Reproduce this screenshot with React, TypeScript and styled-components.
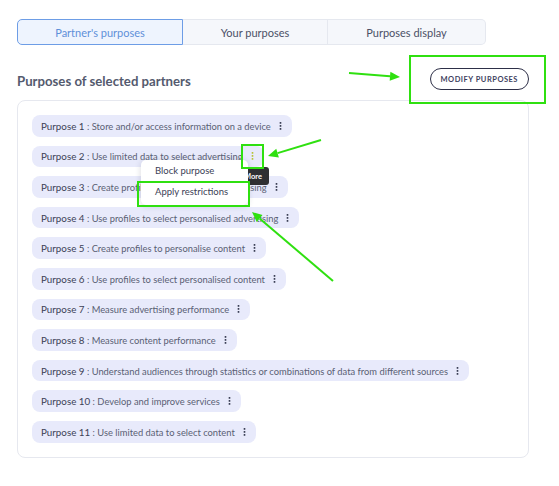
import React from "react";
import styled, { createGlobalStyle } from "styled-components";

const GlobalStyle = createGlobalStyle`
  body {
    margin: 0;
    background: #ffffff;
    font-family: Lato, "Noto Sans", sans-serif;
  }
`;

const Page = styled.div`
  position: relative;
  width: 559px;
  height: 486px;
  padding: 19px 17px 0;
  box-sizing: border-box;
`;

const Tabs = styled.div`
  display: grid;
  grid-template-columns: 166px 145px 158px;
  height: 26px;
`;

const Tab = styled.div<{ $active?: boolean; $first?: boolean; $last?: boolean }>`
  display: flex;
  align-items: center;
  justify-content: center;
  font-size: 11px;
  color: ${(p) => (p.$active ? "#5e90d9" : "#4b5066")};
  background: ${(p) => (p.$active ? "#eef4fe" : "#f5f7fb")};
  border: 1px solid ${(p) => (p.$active ? "#6d9de6" : "#e5e8ef")};
  border-left-width: ${(p) => (p.$first ? "1px" : "0")};
  border-radius: ${(p) =>
    p.$first ? "5px 0 0 5px" : p.$last ? "0 5px 5px 0" : "0"};
`;

const Header = styled.div`
  display: flex;
  justify-content: space-between;
  align-items: center;
  width: 512px;
  height: 22px;
  margin-top: 23px;
`;

const Title = styled.h2`
  margin: 4px 0 0;
  font-size: 13.2px;
  font-weight: 700;
  color: #545a6e;
`;

const ModifyButton = styled.button`
  height: 22px;
  padding: 0 10px;
  border: 1px solid #2d2f47;
  border-radius: 11px;
  background: #ffffff;
  font-family: inherit;
  font-size: 7.5px;
  font-weight: 700;
  letter-spacing: 0.5px;
  color: #3e4160;
`;

const Card = styled.div`
  display: flex;
  flex-direction: column;
  align-items: flex-start;
  gap: 9px;
  width: 512px;
  box-sizing: border-box;
  margin-top: 10px;
  padding: 14px 14px;
  border: 1px solid #e6e8ef;
  border-radius: 8px;
`;

const Pill = styled.div`
  display: inline-flex;
  align-items: center;
  gap: 8px;
  height: 21.6px;
  padding: 0 10px 0 9px;
  border-radius: 8px;
  background: #e8eafb;
  font-size: 9.35px;
  color: #5a5f74;
  white-space: nowrap;
`;

const PurposeNo = styled.span`
  color: #3c4156;
  font-size: 9.8px;
`;

const Dots = ({ color = "#3c4156" }: { color?: string }) => (
  <svg width="3" height="8" viewBox="0 0 3 8">
    <rect x="0.7" y="0" width="1.6" height="1.8" fill={color} />
    <rect x="0.7" y="3" width="1.6" height="1.8" fill={color} />
    <rect x="0.7" y="6" width="1.6" height="1.8" fill={color} />
  </svg>
);

const Menu = styled.div`
  position: absolute;
  left: 141px;
  top: 160px;
  width: 107px;
  padding: 0 0 3px;
  background: #ffffff;
  border-radius: 5px;
  box-shadow: 0 1px 6px rgba(40, 45, 70, 0.18);
  z-index: 3;
`;

const MenuItem = styled.div`
  height: 21px;
  display: flex;
  align-items: center;
  padding-left: 14px;
  font-size: 9.5px;
  color: #3c4156;
`;

const Tooltip = styled.div`
  position: absolute;
  left: 237px;
  top: 167px;
  width: 32px;
  height: 18px;
  display: flex;
  align-items: center;
  justify-content: center;
  background: #2f3033;
  border-radius: 3px;
  color: #ffffff;
  font-size: 7.5px;
  font-weight: 700;
  z-index: 2;
`;

const Highlight = styled.div<{ $x: number; $y: number; $w: number; $h: number }>`
  position: absolute;
  left: ${(p) => p.$x}px;
  top: ${(p) => p.$y}px;
  width: ${(p) => p.$w}px;
  height: ${(p) => p.$h}px;
  box-sizing: border-box;
  border: 2.5px solid #2fe010;
  z-index: 4;
  pointer-events: none;
`;

const Arrows = styled.svg`
  position: absolute;
  left: 0;
  top: 0;
  z-index: 5;
  pointer-events: none;
`;

const purposes = [
  "Store and/or access information on a device",
  "Use limited data to select advertising",
  "Create profiles for personalised advertising",
  "Use profiles to select personalised advertising",
  "Create profiles to personalise content",
  "Use profiles to select personalised content",
  "Measure advertising performance",
  "Measure content performance",
  "Understand audiences through statistics or combinations of data from different sources",
  "Develop and improve services",
  "Use limited data to select content",
];

const Arrow = ({ x1, y1, x2, y2 }: { x1: number; y1: number; x2: number; y2: number }) => {
  const a = Math.atan2(y2 - y1, x2 - x1);
  const len = 10;
  const wing = 4.5;
  const bx = x2 - len * Math.cos(a);
  const by = y2 - len * Math.sin(a);
  const px = -Math.sin(a) * wing;
  const py = Math.cos(a) * wing;
  return (
    <g>
      <line x1={x1} y1={y1} x2={bx} y2={by} stroke="#2fe010" strokeWidth="2" />
      <polygon
        points={`${x2},${y2} ${bx + px},${by + py} ${bx - px},${by - py}`}
        fill="#2fe010"
      />
    </g>
  );
};

export default function App() {
  return (
    <>
      <GlobalStyle />
      <Page>
        <Tabs>
          <Tab $active $first>
            Partner's purposes
          </Tab>
          <Tab>Your purposes</Tab>
          <Tab $last>Purposes display</Tab>
        </Tabs>
        <Header>
          <Title>Purposes of selected partners</Title>
          <ModifyButton>MODIFY PURPOSES</ModifyButton>
        </Header>
        <Card>
          {purposes.map((text, i) => (
            <Pill key={i}>
              <span>
                <PurposeNo>Purpose {i + 1}</PurposeNo> : {text}
              </span>
              <Dots color={i === 1 ? "#b9c43a" : undefined} />
            </Pill>
          ))}
        </Card>

        <Tooltip>More</Tooltip>
        <Menu>
          <MenuItem>Block purpose</MenuItem>
          <MenuItem>Apply restrictions</MenuItem>
        </Menu>

        <Highlight $x={409} $y={55} $w={137} $h={49} />
        <Highlight $x={241} $y={144} $w={23} $h={25} />
        <Highlight $x={137} $y={181} $w={113} $h={26} />

        <Arrows width="559" height="486" viewBox="0 0 559 486">
          <Arrow x1={349} y1={73} x2={400} y2={77} />
          <Arrow x1={321} y1={140} x2={268} y2={156} />
          <Arrow x1={333} y1={281} x2={252} y2={212} />
        </Arrows>
      </Page>
    </>
  );
}
